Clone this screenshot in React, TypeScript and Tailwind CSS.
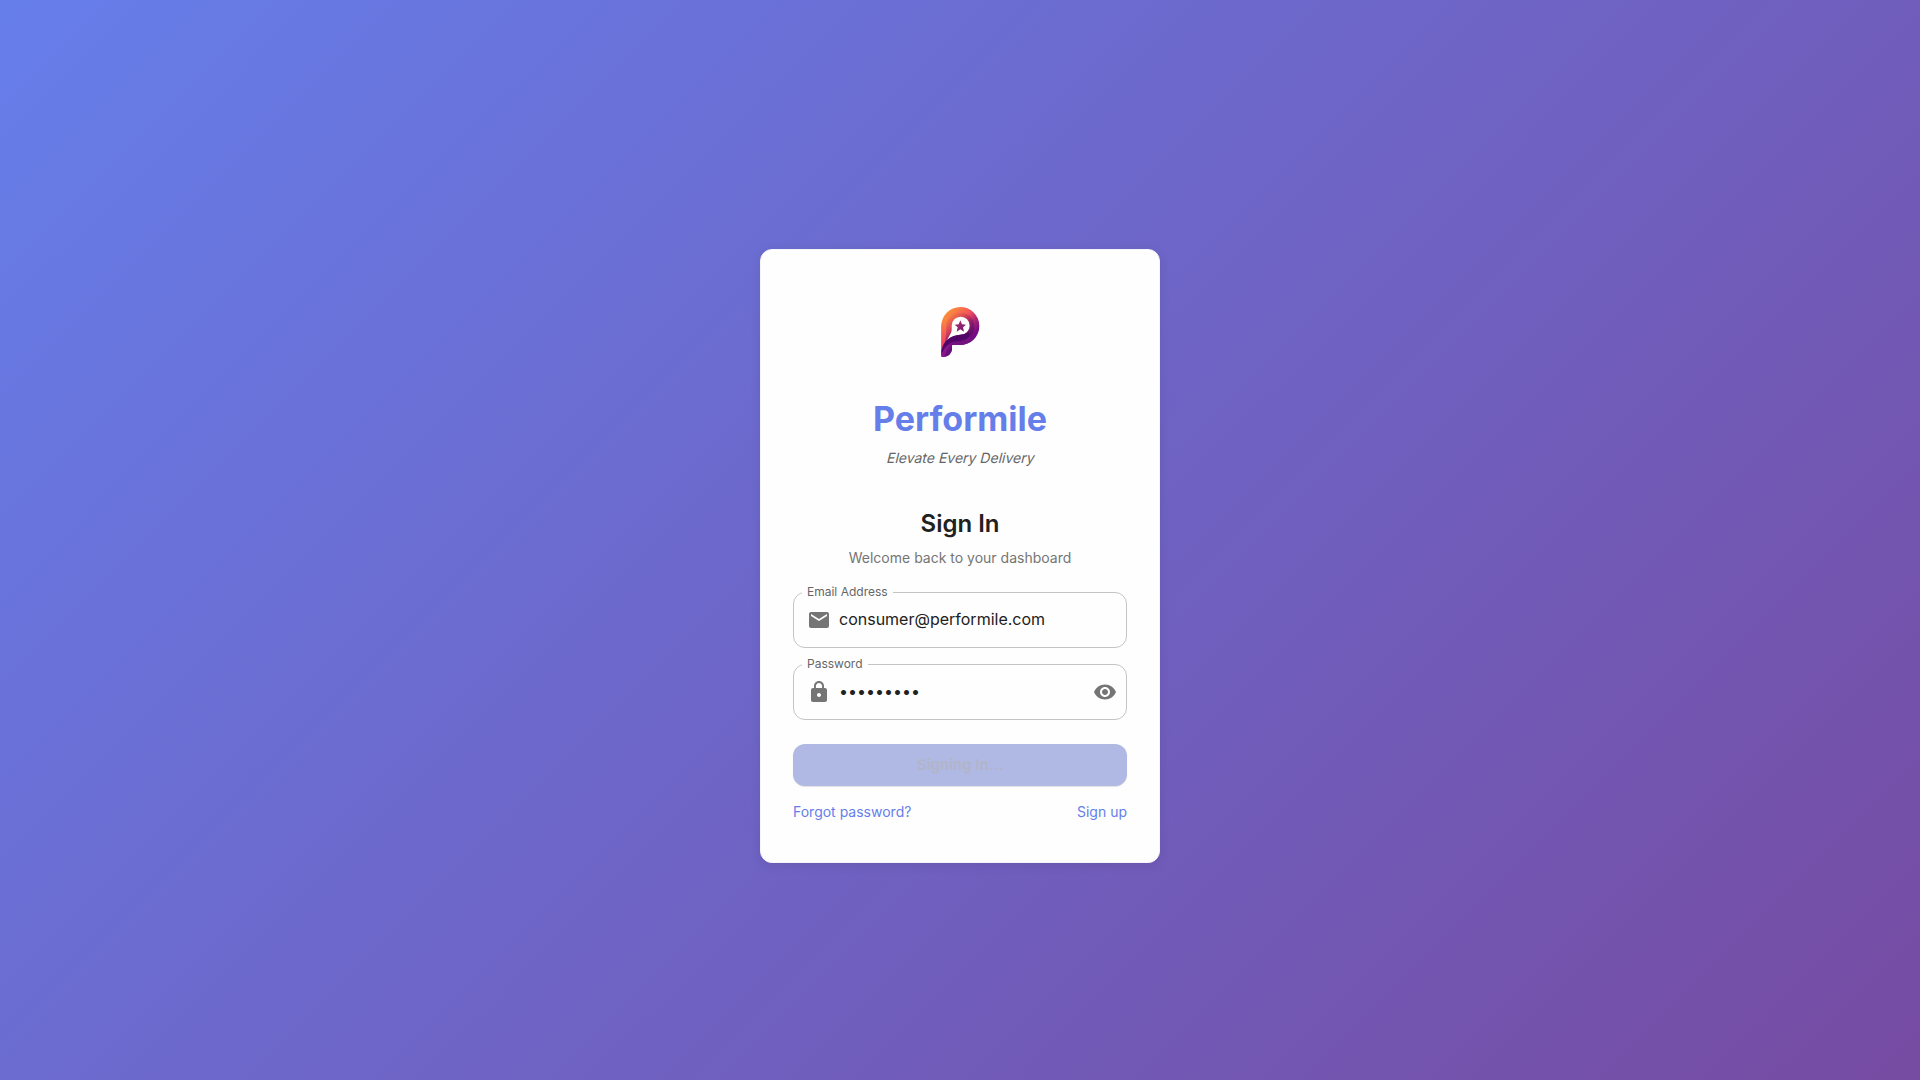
import React from 'react';

function Logo() {
  return (
    <svg viewBox="0 0 300 300" className="h-[100px] w-[100px]" role="img" aria-label="Performile logo">
      <defs>
        <linearGradient id="outer" gradientUnits="userSpaceOnUse" x1="105" y1="95" x2="195" y2="180">
          <stop offset="0" stopColor="#fb9239" />
          <stop offset="0.4" stopColor="#f4545b" />
          <stop offset="0.62" stopColor="#b02770" />
          <stop offset="0.85" stopColor="#750d85" />
          <stop offset="1" stopColor="#6d0b83" />
        </linearGradient>
        <linearGradient id="inner" gradientUnits="userSpaceOnUse" x1="118" y1="100" x2="180" y2="170">
          <stop offset="0" stopColor="#f98040" />
          <stop offset="0.35" stopColor="#d84458" />
          <stop offset="0.65" stopColor="#8b1a6c" />
          <stop offset="1" stopColor="#4f0868" />
        </linearGradient>
        <linearGradient id="edge" gradientUnits="userSpaceOnUse" x1="94" y1="110" x2="94" y2="190">
          <stop offset="0" stopColor="#fa8a3c" />
          <stop offset="1" stopColor="#ef3f66" />
        </linearGradient>
        <linearGradient id="star" x1="0" y1="0" x2="1" y2="1">
          <stop offset="0" stopColor="#b52f66" />
          <stop offset="1" stopColor="#6e1677" />
        </linearGradient>
      </defs>
      <path d="M94 225V133a57 57 0 1 1 57 56H127L94 225Z" fill="url(#outer)" />
      <path d="M94 208V133Q95 120 100 111L113 112Q109 122 109 133L106 190Z" fill="url(#edge)" />
      <path d="M105 183Q108 160 109 133a42 42 0 1 1 43 43L120 186Z" fill="url(#inner)" />
      <path d="M105 186 123 152Q126 147 125 131a27 27 0 1 1 27 27C128 160 114 172 105 186Z" fill="#fff" />
      <path d="M94 225V206C102 172 122 161 150 158Q166 158 176 150Q184 163 166 173Q154 178 135 179C114 181 101 197 94 225Z" fill="#510468" />
      <path d="M95 225C101 198 112 181 140 178Q165 178 180 163L186 175Q171 189 151 189H127C126 191 126 194 126 200Q124 225 95 225Z" fill="#72117f" />
      <path d="M95 225C96 204 108 189 125 188Q126 192 126 200Q124 225 95 225Z" fill="#8b168b" />
      <path d="M103 224Q109 203 125 189L126 202Q122 222 103 224Z" fill="#64117b" />
      <path d="m151 115 5 12 12 1-9 8 3 13-11-7-11 7 3-13-9-8 12-1Z" fill="url(#star)" />
    </svg>
  );
}

function MailIcon() {
  return (
    <svg viewBox="0 0 24 24" className="h-6 w-6 shrink-0 fill-[#757575]">
      <path d="M20 4H4c-1.1 0-1.99.9-1.99 2L2 18c0 1.1.9 2 2 2h16c1.1 0 2-.9 2-2V6c0-1.1-.9-2-2-2m0 4-8 5-8-5V6l8 5 8-5z" />
    </svg>
  );
}

function LockIcon() {
  return (
    <svg viewBox="0 0 24 24" className="h-6 w-6 shrink-0 fill-[#757575]">
      <path d="M18 8h-1V6c0-2.76-2.24-5-5-5S7 3.24 7 6v2H6c-1.1 0-2 .9-2 2v10c0 1.1.9 2 2 2h12c1.1 0 2-.9 2-2V10c0-1.1-.9-2-2-2m-6 9c-1.1 0-2-.9-2-2s.9-2 2-2 2 .9 2 2-.9 2-2 2m3.1-9H8.9V6c0-1.71 1.39-3.1 3.1-3.1s3.1 1.39 3.1 3.1z" />
    </svg>
  );
}

function EyeIcon() {
  return (
    <svg viewBox="0 0 24 24" className="mr-px h-6 w-6 shrink-0 fill-[#757575]">
      <path d="M12 4.5C7 4.5 2.73 7.61 1 12c1.73 4.39 6 7.5 11 7.5s9.27-3.11 11-7.5c-1.73-4.39-6-7.5-11-7.5M12 17c-2.76 0-5-2.24-5-5s2.24-5 5-5 5 2.24 5 5-2.24 5-5 5m0-8c-1.66 0-3 1.34-3 3s1.34 3 3 3 3-1.34 3-3-1.34-3-3-3" />
    </svg>
  );
}

interface FieldProps {
  label: string;
  type: string;
  value: string;
  icon: React.ReactNode;
  action?: React.ReactNode;
}

function Field({ label, type, value, icon, action }: FieldProps) {
  return (
    <fieldset className="-mt-[5px] h-[61px] min-w-0 rounded-xl border border-[#c4c4c4] px-2">
      <legend className="h-[11px] px-[5px] text-xs leading-[9px] text-[#666]">{label}</legend>
      <div className="flex h-[43px] items-center pl-[5px]">
        {icon}
        <input
          type={type}
          value={value}
          readOnly
          aria-label={label}
          className="mb-[2px] ml-2 h-[23px] min-w-0 flex-1 bg-transparent text-base text-[#212121] outline-none"
        />
        {action}
      </div>
    </fieldset>
  );
}

export default function App() {
  return (
    <main className="flex h-screen w-full items-center justify-center bg-[linear-gradient(135deg,#667eea_0%,#764ba2_100%)] pt-8 font-['Inter',sans-serif]">
      <section className="flex h-[614px] w-[400px] flex-col rounded-xl border border-[#f5f5f5] bg-[#fefefe] p-8 shadow-[0_2px_12px_rgba(0,0,0,0.08)]">
        <header className="flex flex-col items-center">
          <Logo />
          <h1 className="mt-4 text-[34px] leading-[42px] font-bold text-[#667eea]">Performile</h1>
          <p className="mt-2 origin-[50%_75%] -skew-x-[14deg] text-sm leading-5 text-[#666]">Elevate Every Delivery</p>
          <h2 className="mt-10 text-2xl leading-8 font-semibold text-[#212121]">Sign In</h2>
          <p className="mt-2 text-sm leading-5 text-[#757575]">Welcome back to your dashboard</p>
        </header>
        <form className="mt-6 flex flex-col gap-4">
          <Field label="Email Address" type="email" value="consumer@performile.com" icon={<MailIcon />} />
          <Field label="Password" type="password" value="123456789" icon={<LockIcon />} action={<EyeIcon />} />
          <button
            type="button"
            disabled
            className="mt-2 h-[42px] rounded-xl bg-[#b0b8e4] text-[15px] font-semibold text-[#b2b5c8] shadow-[0_1px_1px_rgba(0,0,0,0.12)]"
          >
            Signing In...
          </button>
          <div className="flex justify-between text-sm leading-5 text-[#667eea]">
            <a href="#">Forgot password?</a>
            <a href="#">Sign up</a>
          </div>
        </form>
      </section>
    </main>
  );
}
